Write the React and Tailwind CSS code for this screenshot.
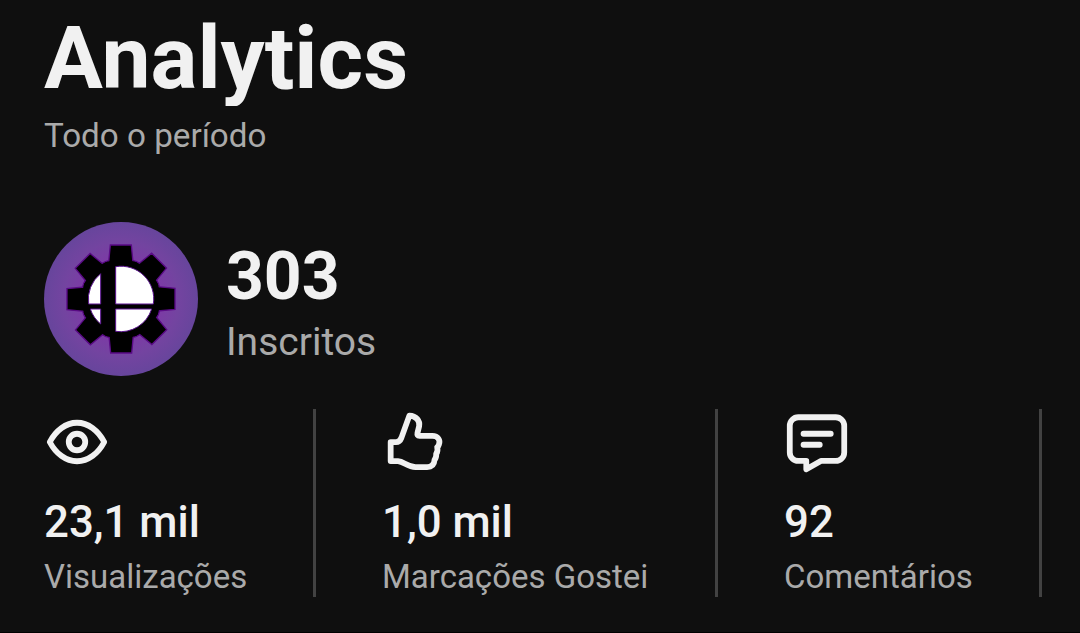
import React from "react";

const EyeIcon = () => (
  <svg viewBox="0 0 24 24" className="size-[66px]" fill="none" stroke="currentColor" strokeWidth="2.1" strokeLinejoin="round">
    <path d="M2.1 12C4.3 7.8 7.9 5 12 5s7.700 2.800 9.900 7c-2.200 4.200-5.800 7-9.900 7s-7.700-2.800-9.900-7Z" />
    <circle cx="12" cy="12" r="3" />
  </svg>
);

const LikeIcon = () => (
  <svg viewBox="0 0 24 24" className="size-[66px]" fill="none" stroke="currentColor" strokeWidth="2.1" strokeLinejoin="round">
    <path d="M3.150 12.050H5.100C6.100 12.050 6.700 11.400 7.050 10.500L9.950 2.400C12.400 2.500 13.900 4.300 13.500 6.300L12.900 8.700C12.750 9.400 13 9.800 13.600 9.800H18.300C20.400 9.800 21.300 11.300 20.700 12.900C20.600 13.300 20.400 13.600 20.050 13.900C20.350 14.900 20.250 15.600 19.700 16.300C19.800 17.300 19.600 17.900 19.100 18.500C19 20.200 18 21.100 16.400 21.100H12.200C9.200 21.100 8 19.100 5.800 18.950H3.150Z" />
  </svg>
);

const CommentIcon = () => (
  <svg viewBox="0 0 24 24" className="size-[66px]" fill="none" stroke="currentColor" strokeWidth="2.1" strokeLinejoin="round" strokeLinecap="round">
    <path d="M5.200 3h13.600a3.100 3.100 0 0 1 3.100 3.100v9.700a3.100 3.100 0 0 1-3.100 3.100H13.400L8.100 21.900V18.900H5.200a3.100 3.100 0 0 1-3.100-3.100V6.100A3.100 3.100 0 0 1 5.200 3Z" />
    <path d="M7.100 9h9.900M7.100 13h5.900" />
  </svg>
);

const teeth = [0, 45, 90, 135, 180, 225, 270, 315];

const Avatar = () => (
  <svg viewBox="-231 -231 462 462" className="size-[154px] shrink-0">
    <defs>
      <radialGradient id="avatar-bg">
        <stop offset="0.5" stopColor="#7d3aa6" />
        <stop offset="0.75" stopColor="#7344a0" />
        <stop offset="1" stopColor="#67459c" />
      </radialGradient>
    </defs>
    <circle r="231" fill="url(#avatar-bg)" />
    {/* Gear */}
    <g stroke="#5a0a86" strokeWidth="4">
      <circle r="121" />
      {teeth.map((angle) => (
        <path key={angle} d="M-37 -110L-32 -162H31L36 -110Z" transform={`rotate(${angle})`} />
      ))}
    </g>
    <circle r="119" />
    {/* Ball with the off-centre cross */}
    <g fill="#fff" stroke="#5c1590" strokeWidth="3">
      <path d="M-61 -76V15H-97A98 98 0 0 1 -61 -76Z" />
      <path d="M-16 -97A98 98 0 0 1 97 15H-16Z" />
      <path d="M-61 30V75A98 98 0 0 1 -92 30Z" />
      <path d="M-16 30H92A98 98 0 0 1 -16 97Z" />
    </g>
  </svg>
);

const Stat = ({ icon, value, label, className }) => (
  <div className={`flex flex-col h-[188px] shrink-0 border-r-3 border-[#424242] ${className}`}>
    {icon}
    <div className="mt-[19px] text-[43.8px] leading-[56px] font-medium whitespace-nowrap">{value}</div>
    <div className="mt-[7px] text-[33px] leading-10 text-[#aaaaaa] whitespace-nowrap">{label}</div>
  </div>
);

const App = () => {
  return (
    <div className="w-[1080px] h-[633px] overflow-hidden bg-[#0f0f0f] text-[#f1f1f1] font-['Roboto',sans-serif] pl-11 border-b border-black">
      <h1 className="h-[106px] mb-[10px] overflow-hidden text-[87.6px] leading-[116px] font-bold">Analytics</h1>
      <p className="text-[33.2px] leading-10 text-[#aaaaaa]">Todo o período</p>

      {/* Channel */}
      <div className="mt-[66px] flex items-start">
        <Avatar />
        <div className="pt-[23px] pl-7">
          <div className="text-[66px] leading-[64px] font-bold">303</div>
          <div className="mt-[9px] text-[39px] leading-[48px] text-[#aaaaaa]">Inscritos</div>
        </div>
      </div>

      {/* Stats */}
      <div className="mt-[33px] flex">
        <Stat icon={<EyeIcon />} value="23,1 mil" label="Visualizações" className="w-[272px]" />
        <Stat icon={<LikeIcon />} value="1,0 mil" label="Marcações Gostei" className="ml-[66px] w-[336px]" />
        <Stat icon={<CommentIcon />} value="92" label="Comentários" className="ml-[66px] w-[258px]" />
      </div>
    </div>
  );
};

export default App;
